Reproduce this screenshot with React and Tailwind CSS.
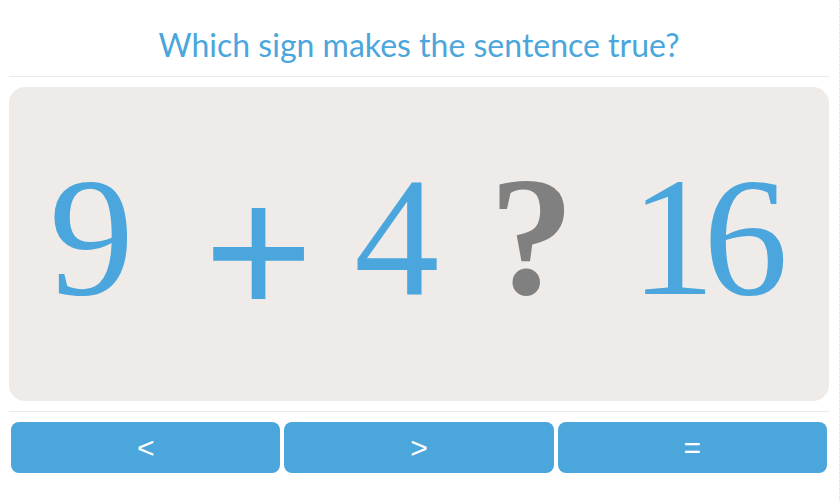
import React from "react";

const Token = ({ children, className = "" }) => (
  <span className={`leading-none font-['Liberation_Serif','Times_New_Roman',serif] ${className}`}>{children}</span>
);

const App = () => {
  const answers = ["<", ">", "="];

  return (
    <div className="w-[840px] h-[501px] bg-white border-r border-dotted border-[#d9d9d9] font-['Lato',sans-serif]">
      <div className="w-[820px] ml-[9px]">
        <h1 className="h-[77px] pt-[25px] text-center text-[32px] leading-[40px] text-[#4aa6dc] border-b border-[#ebebeb]">
          Which sign makes the sentence true?
        </h1>

        <div className="mt-[10px] h-[314px] rounded-[16px] bg-[#efebe8] flex items-center pl-[40px] pb-[14px]">
          <Token className="text-[170px] text-[#4aa6dc] mr-[69px]">9</Token>
          <Token className="text-[195px] font-bold text-[#4aa6dc] mr-[40px] mt-[30px]">+</Token>
          <Token className="text-[170px] text-[#4aa6dc] mr-[50px]">4</Token>
          <Token className="text-[170px] font-bold text-[#808080] mr-[56px]">?</Token>
          <Token className="text-[170px] text-[#4aa6dc] tracking-[-12px]">16</Token>
        </div>

        <div className="mt-[10px] border-t border-[#ebebeb] pt-[10px] flex gap-[4px] px-[2px]">
          {answers.map((a) => (
            <button
              key={a}
              className="flex-1 h-[51px] rounded-[8px] bg-[#4aa6db] text-white text-[30px] leading-none font-['Liberation_Sans',Arial,sans-serif] flex items-center justify-center"
            >
              {a}
            </button>
          ))}
        </div>
      </div>
    </div>
  );
};

export default App;
